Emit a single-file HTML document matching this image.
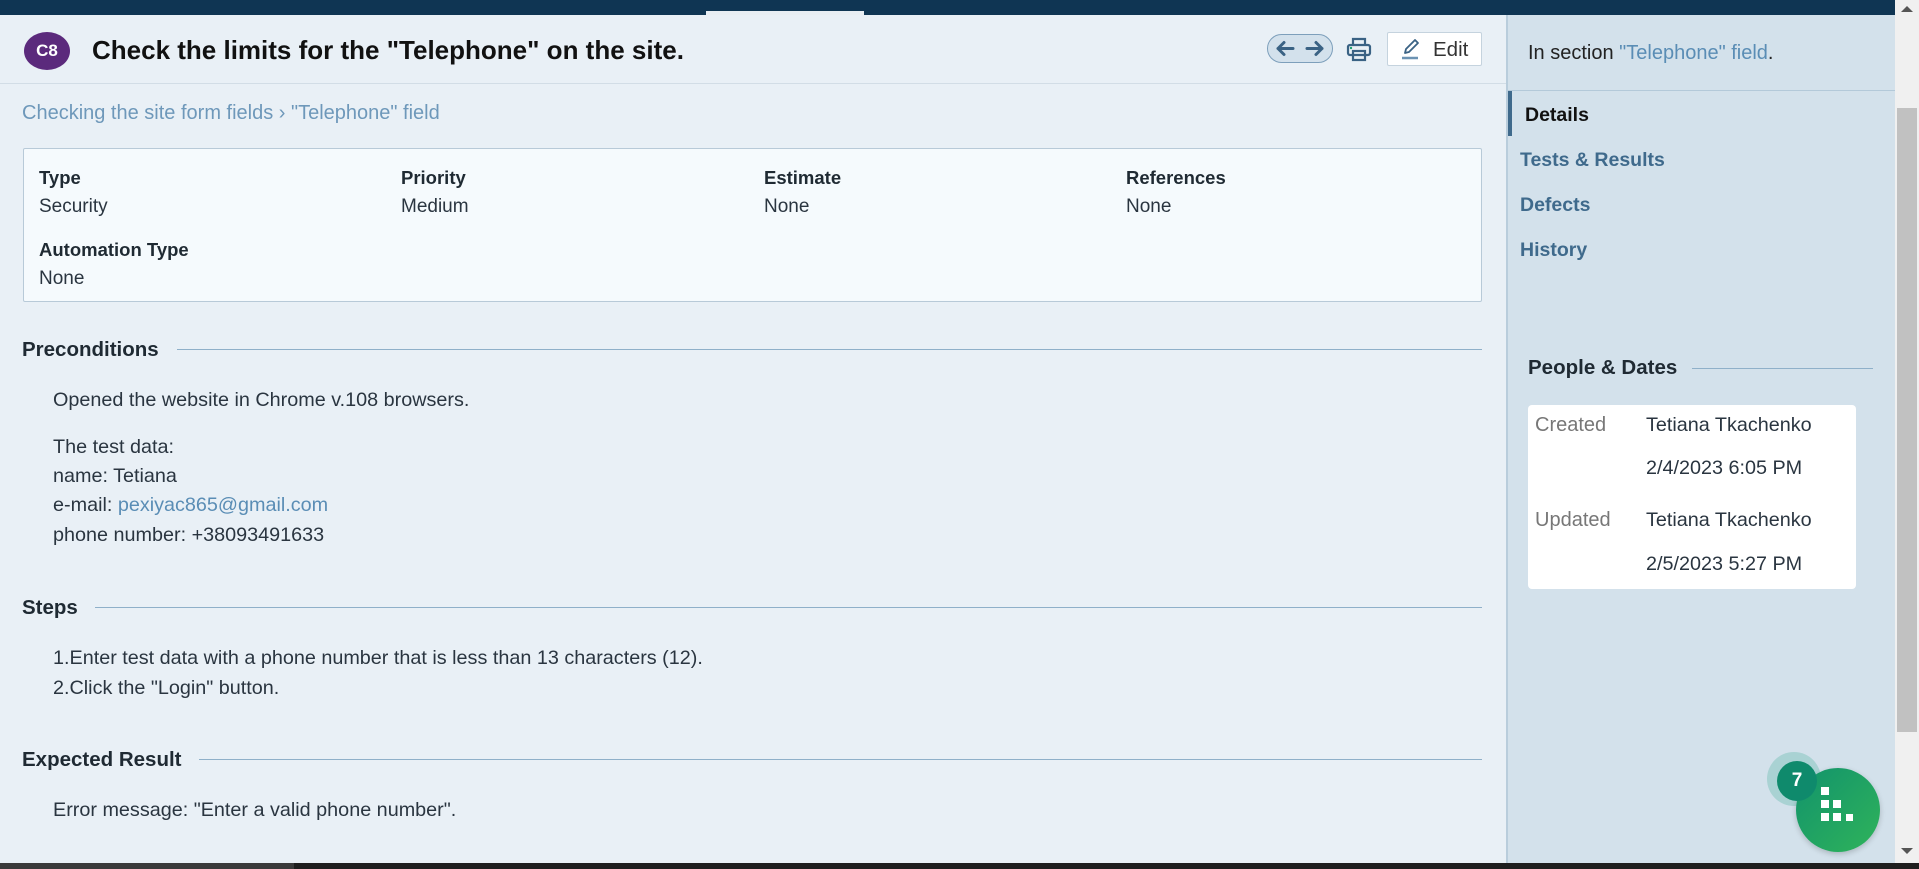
<!DOCTYPE html>
<html><head><meta charset="utf-8"><style>
*{margin:0;padding:0;box-sizing:border-box}
body{width:1919px;height:869px;overflow:hidden;background:#e9f0f6;font-family:"Liberation Sans",sans-serif;color:#1f2a33;position:relative;font-size:18px}
.abs{position:absolute;white-space:nowrap}
.top{position:absolute;left:0;top:0;width:1895px;height:15px;background:#0f3553}
.lbl{font-weight:bold;font-size:18.5px;color:#1f2a33}
.val{font-size:19.8px;color:#2a3540}
.ival{font-size:19px;color:#2a3540}
.h{font-weight:bold;font-size:20.5px;color:#1f2a33}
.line{position:absolute;height:1px;background:#8fb0c9}
a{color:#5a8db5;text-decoration:none}
.nav{font-weight:bold;font-size:19.5px;color:#3f6a8c}
</style></head><body>
<div class="top"></div>
<div class="abs" style="left:706px;top:11px;width:158px;height:4px;background:#e8eef3"></div>

<div class="abs" style="left:24px;top:32px;width:46px;height:38px;border-radius:50%;background:#5b2a7c;color:#fff;font-weight:bold;font-size:17px;text-align:center;line-height:38px">C8</div>
<div class="abs" style="left:92px;top:35px;font-size:26px;font-weight:bold;color:#111">Check the limits for the "Telephone" on the site.</div>
<div class="abs" style="left:0;top:83px;width:1506px;height:1px;background:#d2dde6"></div>

<div class="abs" style="left:1267px;top:34px;width:66px;height:29px;border:1px solid #7d9fbb;border-radius:15px;background:#d3e1ec"></div>
<svg class="abs" style="left:1267px;top:34px" width="66" height="29" viewBox="0 0 66 29"><g fill="none" stroke="#3a6284" stroke-width="3" stroke-linecap="round" stroke-linejoin="round"><path d="M26 14.5H11M17 8.5l-6 6 6 6"/><path d="M40 14.5h15M49 8.5l6 6-6 6"/></g></svg>
<svg class="abs" style="left:1346px;top:36px" width="26" height="26" viewBox="0 0 26 26"><g fill="none" stroke="#3a6284" stroke-width="2.2"><path d="M7 9V3h12v6"/><rect x="2" y="9" width="22" height="10" rx="2"/><rect x="7" y="15" width="12" height="9"/></g><circle cx="5" cy="12" r="1.2" fill="#1aa070"/></svg>
<div class="abs" style="left:1387px;top:32px;width:95px;height:34px;background:#fff;border:1px solid #c5d3de;border-radius:2px"></div>
<svg class="abs" style="left:1400px;top:38px" width="22" height="22" viewBox="0 0 22 22"><path d="M5 15l1-4 9-9 3 3-9 9z" fill="none" stroke="#3a6284" stroke-width="1.8" stroke-linejoin="round"/><path d="M2 20h16" stroke="#6c93b3" stroke-width="2.5"/></svg>
<div class="abs" style="left:1433px;top:38px;font-size:20.5px;color:#333">Edit</div>

<div class="abs" style="left:22px;top:102px;font-size:20px;color:#6e98ba">Checking the site form fields › "Telephone" field</div>

<div class="abs" style="left:23px;top:148px;width:1459px;height:154px;background:#f5fafd;border:1px solid #b8cad8;border-radius:2px"></div>
<div class="abs lbl" style="left:39px;top:167px">Type</div><div class="abs ival" style="left:39px;top:196px">Security</div>
<div class="abs lbl" style="left:401px;top:167px">Priority</div><div class="abs ival" style="left:401px;top:196px">Medium</div>
<div class="abs lbl" style="left:764px;top:167px">Estimate</div><div class="abs ival" style="left:764px;top:196px">None</div>
<div class="abs lbl" style="left:1126px;top:167px">References</div><div class="abs ival" style="left:1126px;top:196px">None</div>
<div class="abs lbl" style="left:39px;top:239px">Automation Type</div><div class="abs ival" style="left:39px;top:268px">None</div>

<div class="abs h" style="left:22px;top:338px">Preconditions</div><div class="line" style="left:177px;top:349px;width:1305px"></div>
<div class="abs val" style="left:53px;top:389px">Opened the website in Chrome v.108 browsers.</div>
<div class="abs val" style="left:53px;top:436px">The test data:</div>
<div class="abs val" style="left:53px;top:465px">name: Tetiana</div>
<div class="abs val" style="left:53px;top:494px">e-mail: <a>pexiyac865@gmail.com</a></div>
<div class="abs val" style="left:53px;top:524px">phone number: +38093491633</div>

<div class="abs h" style="left:22px;top:596px">Steps</div><div class="line" style="left:95px;top:607px;width:1387px"></div>
<div class="abs val" style="left:53px;top:647px">1.Enter test data with a phone number that is less than 13 characters (12).</div>
<div class="abs val" style="left:53px;top:677px">2.Click the "Login" button.</div>

<div class="abs h" style="left:22px;top:748px">Expected Result</div><div class="line" style="left:199px;top:759px;width:1283px"></div>
<div class="abs val" style="left:53px;top:799px">Error message: "Enter a valid phone number".</div>

<div class="abs" style="left:1506px;top:15px;width:389px;height:848px;background:#d3e1eb;border-left:2px solid #b9cddc"></div>
<div class="abs" style="left:1528px;top:42px;font-size:20px;color:#222">In section <a>"Telephone" field</a>.</div>
<div class="abs" style="left:1508px;top:90px;width:387px;height:1px;background:#b3c9d9"></div>
<div class="abs" style="left:1508px;top:91px;width:4px;height:45px;background:#3f6a8c"></div>
<div class="abs nav" style="left:1525px;top:104px;color:#111">Details</div>
<div class="abs nav" style="left:1520px;top:149px">Tests &amp; Results</div>
<div class="abs nav" style="left:1520px;top:194px">Defects</div>
<div class="abs nav" style="left:1520px;top:239px">History</div>
<div class="abs h" style="left:1528px;top:356px;font-size:20.5px">People &amp; Dates</div><div class="line" style="left:1692px;top:368px;width:181px"></div>
<div class="abs" style="left:1528px;top:405px;width:328px;height:184px;background:#fff;border-radius:4px"></div>
<div class="abs" style="left:1535px;top:414px;color:#777;font-size:20px">Created</div>
<div class="abs val" style="left:1646px;top:414px">Tetiana Tkachenko</div>
<div class="abs val" style="left:1646px;top:457px">2/4/2023 6:05 PM</div>
<div class="abs" style="left:1535px;top:509px;color:#777;font-size:20px">Updated</div>
<div class="abs val" style="left:1646px;top:509px">Tetiana Tkachenko</div>
<div class="abs val" style="left:1646px;top:553px">2/5/2023 5:27 PM</div>

<div class="abs" style="left:1895px;top:0;width:24px;height:863px;background:#f0f0f0"></div>
<div class="abs" style="left:1897px;top:108px;width:20px;height:624px;background:#c1c1c1"></div>
<div class="abs" style="left:1901px;top:6px;width:0;height:0;border-left:6px solid transparent;border-right:6px solid transparent;border-bottom:6px solid #555"></div>
<div class="abs" style="left:1901px;top:848px;width:0;height:0;border-left:6px solid transparent;border-right:6px solid transparent;border-top:6px solid #555"></div>

<div class="abs" style="left:1767px;top:752px;width:54px;height:54px;border-radius:50%;background:#a9d2d3"></div>
<div class="abs" style="left:1796px;top:768px;width:84px;height:84px;border-radius:50%;background:linear-gradient(135deg,#12936c,#2fb35a);box-shadow:0 2px 6px rgba(0,0,0,.2)"></div>
<div class="abs" style="left:1777px;top:761px;width:40px;height:40px;border-radius:50%;background:#0f8a6c;color:#fff;font-weight:bold;font-size:19px;text-align:center;line-height:40px">7</div>
<svg class="abs" style="left:1821px;top:787px" width="40" height="40" viewBox="0 0 40 40" fill="#fff"><rect x="0" y="0" width="8" height="8"/><rect x="0" y="13" width="8" height="8"/><rect x="12" y="13" width="8" height="8"/><rect x="0" y="26" width="8" height="8"/><rect x="12" y="26" width="8" height="8"/><rect x="25" y="27" width="7" height="7"/></svg>

<div class="abs" style="left:0;top:863px;width:1919px;height:6px;background:#1e1e1e"></div>
<div class="abs" style="left:0;top:863px;width:294px;height:6px;background:#3a3a3a"></div>
</body></html>
